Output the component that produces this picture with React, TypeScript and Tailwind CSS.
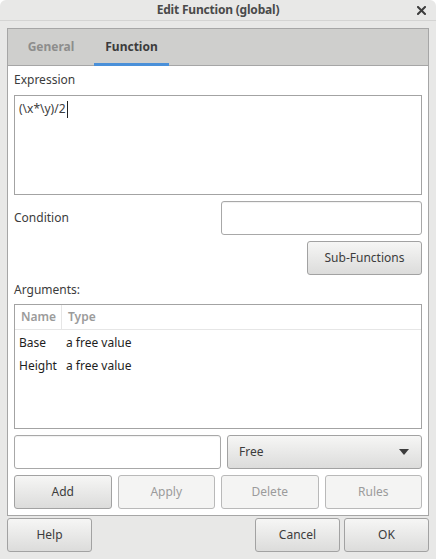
import React from "react";

function Btn({
  label,
  disabled,
  className = "",
}: {
  label: string;
  disabled?: boolean;
  className?: string;
}) {
  const base = disabled
    ? "bg-[#f4f4f3] border-[#b9b9b9] text-[#9b9b9b]"
    : "bg-gradient-to-b from-[#f6f6f5] to-[#dcdcdb] border-[#a2a2a2] text-[#3c3c3c]";
  return (
    <div
      className={`h-[34px] flex items-center justify-center rounded-[3px] border ${base} ${className}`}
    >
      {label}
    </div>
  );
}

export default function App() {
  const args = [
    { name: "Base", type: "a free value" },
    { name: "Height", type: "a free value" },
  ];

  return (
    <div
      className="w-[436px] h-[559px] bg-white text-[12px] text-[#3c3c3c] overflow-hidden"
      style={{ fontFamily: '"Noto Sans", "Open Sans", sans-serif' }}
    >
      <div className="h-full rounded-t-[6px] bg-[#e8e8e7] flex flex-col">
        {/* title bar */}
        <div className="h-[21px] border-b border-[#d4d4d3] grid grid-cols-[1fr_auto_1fr] items-center">
          <div />
          <div className="font-bold text-[#4a4a4a] tracking-[-0.2px] leading-none pb-[1px]">
            Edit Function (global)
          </div>
          <div className="flex justify-end pr-[10px]">
            <svg width="9" height="9" viewBox="0 0 9 9">
              <path
                d="M1 1 L8 8 M8 1 L1 8"
                stroke="#3c3c3c"
                strokeWidth="2"
                strokeLinecap="square"
              />
            </svg>
          </div>
        </div>

        {/* notebook */}
        <div className="mt-[7px] mx-[7px] border border-[#a6a6a6] flex flex-col">
          <div className="h-[37px] bg-[#cfcfcd] border-b border-[#a6a6a6] flex pl-[8px] gap-[8px]">
            <div className="w-[70px] h-[36px] flex items-center justify-center font-bold text-[#8d8d8c]">
              General
            </div>
            <div className="w-[75px] h-[37px] -mb-px flex items-center justify-center font-bold text-[#3c3c3c] border-b-[3px] border-[#4a90d9] pt-[2px]">
              Function
            </div>
          </div>

          <div className="bg-white px-[6px] pb-[6px] flex flex-col">
            <div className="mt-[6px] h-[16px] leading-[16px]">Expression</div>
            <div className="mt-[7px] h-[100px] border border-[#a3a3a3] px-[4px] pt-[5px] flex items-start">
              <span className="leading-[16px]">(\x*\y)/2</span>
              <span className="w-px h-[17px] bg-[#222] ml-px" />
            </div>

            <div className="mt-[6px] h-[34px] flex items-center justify-between">
              <span>Condition</span>
              <div className="w-[201px] h-[34px] rounded-[3px] border border-[#a8a8a8] bg-white shadow-[inset_0_1px_1px_rgba(0,0,0,0.06)]" />
            </div>

            <div className="mt-[6px] flex justify-end">
              <Btn label="Sub-Functions" className="w-[115px]" />
            </div>

            <div className="mt-[7px] h-[16px] leading-[16px]">Arguments:</div>

            <div className="mt-[6px] h-[125px] border border-[#a3a3a3] flex flex-col">
              <div className="h-[25px] border-b border-[#e6e6e6] flex text-[#9b9b9b] font-semibold">
                <div className="w-[47px] border-r border-[#e6e6e6] pl-[6px] flex items-center">
                  Name
                </div>
                <div className="pl-[6px] flex items-center">Type</div>
              </div>
              <div className="pt-[1px] flex flex-col text-[#1e1e1e]">
                {args.map((a) => (
                  <div key={a.name} className="h-[23px] flex items-center">
                    <div className="w-[47px] pl-[4px]">{a.name}</div>
                    <div className="pl-[4px]">{a.type}</div>
                  </div>
                ))}
              </div>
            </div>

            <div className="mt-[6px] flex gap-[6px]">
              <div className="w-[207px] h-[34px] rounded-[3px] border border-[#a8a8a8] bg-white shadow-[inset_0_1px_1px_rgba(0,0,0,0.06)]" />
              <div className="flex-1 h-[34px] rounded-[3px] border border-[#a2a2a2] bg-gradient-to-b from-[#f6f6f5] to-[#dcdcdb] flex items-center justify-between pl-[11px] pr-[12px]">
                <span>Free</span>
                <svg width="10" height="6" viewBox="0 0 10 6">
                  <path d="M0 0 L10 0 L5 6 Z" fill="#3c3c3c" />
                </svg>
              </div>
            </div>

            <div className="mt-[6px] grid grid-cols-4 gap-[6px]">
              <Btn label="Add" />
              <Btn label="Apply" disabled />
              <Btn label="Delete" disabled />
              <Btn label="Rules" disabled />
            </div>
          </div>
        </div>

        {/* dialog buttons */}
        <div className="mt-[2px] px-[7px] flex">
          <Btn label="Help" className="w-[85px]" />
          <div className="flex-1" />
          <Btn label="Cancel" className="w-[85px]" />
          <Btn label="OK" className="w-[85px] ml-[4px]" />
        </div>
      </div>
    </div>
  );
}
